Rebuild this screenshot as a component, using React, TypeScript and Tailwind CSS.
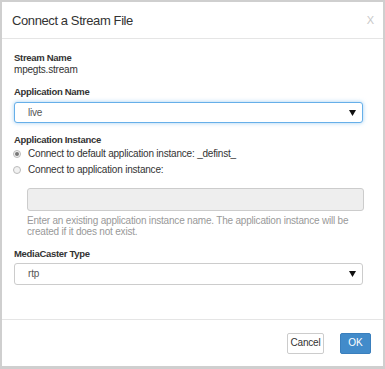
import React from 'react';

const font = { fontFamily: '"Liberation Sans", Arial, sans-serif' };

function Arrow() {
  return (
    <svg width="7" height="6" viewBox="0 0 7 6" className="shrink-0">
      <polygon points="0,0 7,0 3.5,6" fill="#111" />
    </svg>
  );
}

function Select({ value, focused }: { value: string; focused?: boolean }) {
  return (
    <div
      className={
        'flex items-center justify-between bg-white pl-[13px] pr-[6px] rounded-[3px] border ' +
        (focused
          ? 'h-[21px] border-[#66afe9] shadow-[0_0_4px_rgba(102,175,233,0.6)]'
          : 'h-[22px] border-[#ccc]')
      }
    >
      <span className="text-[10px] tracking-[-0.2px] text-[#555] leading-none">{value}</span>
      <Arrow />
    </div>
  );
}

function Radio({ checked, label }: { checked?: boolean; label: string }) {
  return (
    <div className="flex items-center h-4">
      <span className="ml-[-1px] w-2 h-2 rounded-full border border-[#bbb] bg-[#f2f2f2] flex items-center justify-center">
        {checked && <span className="w-1 h-1 rounded-full bg-[#777]" />}
      </span>
      <span className="ml-[7px] text-[10px] tracking-[-0.2px] text-[#333] leading-none">{label}</span>
    </div>
  );
}

function Label({ children, className = '' }: { children: React.ReactNode; className?: string }) {
  return (
    <div className={'text-[9.5px] font-bold tracking-[-0.3px] text-[#333] leading-[12px] ' + className}>
      {children}
    </div>
  );
}

export default function App() {
  return (
    <div className="w-[385px] h-[369px] bg-[#cfcfcf] pt-[2px] pl-[2px] pr-[2px] pb-[3px]" style={font}>
      <div className="bg-white h-full flex flex-col">
        {/* header */}
        <div className="h-[37px] border-b border-[#e5e5e5] flex items-center justify-between pl-[10px] pr-[9px] shrink-0">
          <span className="text-[13px] tracking-[-0.4px] text-[#333] leading-none">Connect a Stream File</span>
          <span className="text-[11px] text-[#c8c8c8] leading-none">X</span>
        </div>

        {/* body */}
        <div className="flex-1 pl-3 pr-5 pt-[13px]">
          <Label>Stream Name</Label>
          <div className="text-[10px] tracking-[-0.2px] text-[#333] leading-[12px]">mpegts.stream</div>

          <Label className="mt-[10px]">Application Name</Label>
          <div className="mt-1">
            <Select value="live" focused />
          </div>

          <Label className="mt-[11px]">Application Instance</Label>
          <Radio checked label="Connect to default application instance: _definst_" />
          <Radio label="Connect to application instance:" />

          <div className="ml-[13px] mt-[10px] w-[337px] h-[23px] bg-[#eee] border border-[#ccc] rounded-[3px]" />
          <div className="ml-[13px] mt-1 whitespace-nowrap text-[10px] tracking-[-0.2px] text-[#999] leading-[11px]">
            Enter an existing application instance name. The application instance will be
            <br />
            created if it does not exist.
          </div>

          <Label className="mt-[11px]">MediaCaster Type</Label>
          <div className="mt-[3px]">
            <Select value="rtp" />
          </div>
        </div>

        {/* footer */}
        <div className="h-[47px] border-t border-[#e5e5e5] flex items-center justify-end gap-4 pr-3 shrink-0">
          <button className="h-[21px] w-[37px] bg-white border border-[#ccc] rounded-[2px] text-[10px] tracking-[-0.2px] text-[#333] leading-none">
            Cancel
          </button>
          <button className="h-[21px] w-[31px] bg-[#428bca] border border-[#3a7fbd] rounded-[2px] text-[10px] text-white leading-none">
            OK
          </button>
        </div>
      </div>
    </div>
  );
}
